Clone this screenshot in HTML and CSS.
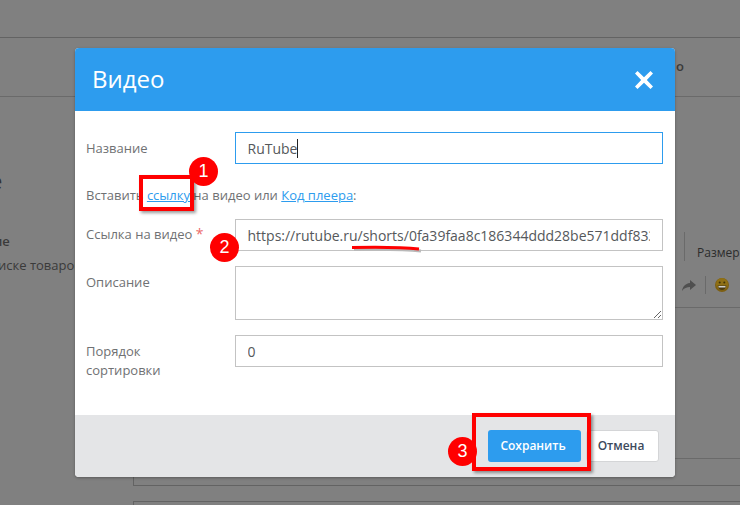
FILE: index.html
```html
<!DOCTYPE html>
<html lang="ru">
<head>
<meta charset="utf-8">
<title>Видео</title>
<link rel="stylesheet" href="styles.css">
</head>
<body>
<div class="page">
  <div class="topbar"></div>
  <div class="tabs"><span class="tab-text">о</span></div>
  <div class="main">
    <div class="side">
      <div class="side-title">е</div>
      <div class="side-label">ние</div>
      <div class="side-text">иске товаров</div>
    </div>
    <div class="content">
      <div class="editor">
        <div class="editor-row1"><span class="ed-sep"></span><span class="ed-size">Размер</span></div>
        <div class="editor-row2">
          <svg class="ed-arrow" width="14" height="11" viewBox="0 0 14 11"><path d="M8 0l6 5-6 5V7C5 7 2 8 0 11c.5-4 3-7.500 8-8z" fill="#4f4f4f"/></svg>
          <span class="ed-sep2"></span>
          <svg class="ed-emoji" width="14" height="14" viewBox="0 0 14 14"><circle cx="7" cy="7" r="7" fill="#7d5f12"/><circle cx="7" cy="6" r="6" fill="#8f7016"/><path d="M2.500 7.500h9C11 10.500 9 12 7 12S3 10.500 2.500 7.500z" fill="#4a3a12"/><path d="M3.500 8h7v1.500h-7z" fill="#cfcfcf"/><circle cx="4.700" cy="4.500" r="1" fill="#3f3208"/><circle cx="9.300" cy="4.500" r="1" fill="#3f3208"/></svg>
        </div>
      </div>
      <div class="line-a"></div>
      <div class="box-a"></div>
      <div class="box-b"></div>
    </div>
  </div>
</div>

<div class="modal">
  <div class="modal-head">
    <h2 class="modal-title">Видео</h2>
    <svg class="modal-close" width="20" height="20" viewBox="0 0 20 20"><path d="M3.500 1L10 7.200 16.500 1 19 3.500 12.800 10 19 16.500 16.500 19 10 12.800 3.500 19 1 16.500 7.200 10 1 3.500z" fill="#fff"/></svg>
  </div>
  <form class="modal-body">
    <div class="row">
      <label class="lbl lbl-first">Название</label>
      <div class="field field-focus"><span>RuTube</span><i class="caret"></i></div>
    </div>
    <p class="hint">Вставить <a href="#">ссылку</a> на видео или <a href="#">Код плеера</a>:</p>
    <div class="row">
      <label class="lbl lbl-url">Ссылка на видео <b class="req">*</b></label>
      <input class="field" type="text" value="https://rutube.ru/shorts/0fa39faa8c186344ddd28be571ddf833a1b2c3d/">
    </div>
    <div class="row">
      <label class="lbl lbl-low">Описание</label>
      <textarea class="field area"></textarea>
    </div>
    <div class="row">
      <label class="lbl lbl-wrap lbl-low">Порядок сортировки</label>
      <input class="field" type="text" value="0">
    </div>
  </form>
  <div class="modal-foot">
    <button class="btn btn-save" type="button">Сохранить</button>
    <button class="btn btn-cancel" type="button">Отмена</button>
  </div>
</div>

<div class="mark mark-1"></div>
<div class="mark mark-3"></div>
<svg class="stroke" width="80" height="12" viewBox="0 0 80 12"><path d="M1 3.500C25 3 50 3 68 5" fill="none" stroke="#b9b9b9" stroke-width="3" transform="translate(2 2)"/><path d="M1 3.500C25 3 50 3 68 5" fill="none" stroke="#f00" stroke-width="3"/></svg>
<span class="badge badge-1">1</span>
<span class="badge badge-2">2</span>
<span class="badge badge-3">3</span>
</body>
</html>
```

FILE: styles.css
```css
* { box-sizing: border-box; }
html, body { margin: 0; height: 100%; }
body {
  width: 740px;
  height: 505px;
  overflow: hidden;
  position: relative;
  background: #808080;
  font-family: "Open Sans", sans-serif;
  color: #6f7173;
  font-size: 13px;
}
.page { height: 505px; overflow: hidden; color: #3a3a3a; }
.topbar { height: 38px; border-bottom: 1px solid #636363; }
.tabs {
  height: 59px;
  border-bottom: 1px solid #6a6a6a;
  padding-top: 18px;
  padding-left: 676px;
  font-size: 13px;
  font-weight: 600;
  line-height: 20px;
}
.tab-text { display: block; }
.main { display: flex; height: 408px; }
.side { width: 133px; flex: none; padding-top: 68px; }
.side-title { font-size: 22px; line-height: 30px; font-weight: 400; color: #333; margin-left: -10px; }
.side-label { margin-top: 37px; line-height: 18px; font-weight: 600; margin-left: -15px; white-space: nowrap; }
.side-text { margin-top: 6px; line-height: 18px; margin-left: -2px; white-space: nowrap; }
.content { flex: 1; min-width: 0; padding-top: 135px; }
.editor { height: 76px; border-bottom: 1px solid #6a6a6a; padding-left: 551px; }
.editor-row1 { display: flex; align-items: flex-start; height: 30px; }
.ed-sep { width: 1px; height: 29px; background: #6a6a6a; flex: none; }
.ed-size { margin-left: 12px; margin-top: 12px; font-size: 12px; line-height: 18px; color: #2c2c2c; white-space: nowrap; }
.editor-row2 { display: flex; align-items: center; padding-top: 14px; margin-left: -2px; }
.ed-arrow { flex: none; }
.ed-sep2 { width: 1px; height: 18px; background: #6a6a6a; margin-left: 9px; flex: none; }
.ed-emoji { margin-left: 9px; flex: none; }
.line-a { height: 1px; background: #6a6a6a; margin-top: 150px; }
.box-a { height: 28px; border: 1px solid #636363; border-top-color: #6a6a6a; border-right: 0; margin-top: -1px; }
.box-b { height: 20px; margin-top: 15px; border: 1px solid #636363; border-right: 0; }

.modal {
  position: absolute;
  left: 75px;
  top: 48px;
  width: 600px;
  height: 429px;
  display: flex;
  flex-direction: column;
  background: #fff;
  border-radius: 4px;
  overflow: hidden;
  box-shadow: 0 1px 3px rgba(0,0,0,.3);
}
.modal-head {
  height: 63px;
  flex: none;
  background: #2d9cee;
  display: flex;
  align-items: center;
  justify-content: space-between;
  padding: 0 21px 0 17px;
}
.modal-title { margin: 0 0 2px; font-size: 24px; font-weight: 400; color: #fff; line-height: 32px; }
.modal-close { display: block; }
.modal-body { flex: 1; padding: 21px 12px 0 11px; }
.row { display: flex; align-items: flex-start; margin-bottom: 15px; }
.lbl { width: 149px; flex: none; padding-top: 6px; line-height: 19px; color: #6f7173; }
.lbl-first, .lbl-low { padding-top: 7px; }
.lbl-url { padding-top: 5px; }
.lbl-wrap { padding-right: 50px; }
.req { color: #ec6a6a; font-weight: 400; font-size: 14px; }
.hint { margin: 22px 0 15px; line-height: 18px; color: #6f7173; }
.hint a { color: #2d9cee; }
.field {
  display: flex;
  align-items: center;
  width: 428px;
  height: 32px;
  border: 1px solid #c3c3c3;
  border-radius: 0;
  padding: 0 12px 0 11.500px;
  margin: 0;
  font: 14px "Open Sans", sans-serif;
  color: #55585b;
  background: #fff;
  outline: 0;
}
.field-focus { border-color: #2d9cee; }
.caret { display: block; width: 1px; height: 19px; background: #222; margin-left: 0; }
.area { display: block; height: 54px; }
.row:has(.field-focus) { margin-bottom: 0; }
.row:has(.area) { margin-bottom: 15px; }
.modal-foot {
  height: 62px;
  flex: none;
  background: #e4e5e7;
  display: flex;
  justify-content: flex-end;
  align-items: flex-start;
  gap: 5px;
  padding: 15px 16px 0 0;
}
.btn {
  height: 32px;
  border-radius: 3px;
  font: 600 12px "Open Sans", sans-serif;
  padding: 0 0 1px;
  margin: 0;
}
.btn-save { width: 93px; background: #2d9cee; color: #fff; border: 0; padding-right: 3px; }
.btn-cancel { width: 73px; background: #fff; color: #3d4a5c; border: 1px solid #d4d5d7; padding-right: 3px; }

.mark {
  position: absolute;
  border: 4px solid #f00;
  box-shadow: 2px 2px 3px rgba(0,0,0,.4);
}
.mark-1 { left: 139px; top: 175px; width: 55px; height: 36px; }
.mark-3 { left: 472px; top: 413px; width: 119px; height: 58px; }
.stroke { position: absolute; left: 351px; top: 244px; }
.badge {
  position: absolute;
  width: 29px;
  height: 29px;
  border-radius: 50%;
  background: #f00;
  color: #fff;
  font: 18px/29px "Liberation Sans", sans-serif;
  text-align: center;
}
.badge-1 { left: 189px; top: 157px; }
.badge-2 { left: 210px; top: 233px; }
.badge-3 { left: 448px; top: 437px; }
```
